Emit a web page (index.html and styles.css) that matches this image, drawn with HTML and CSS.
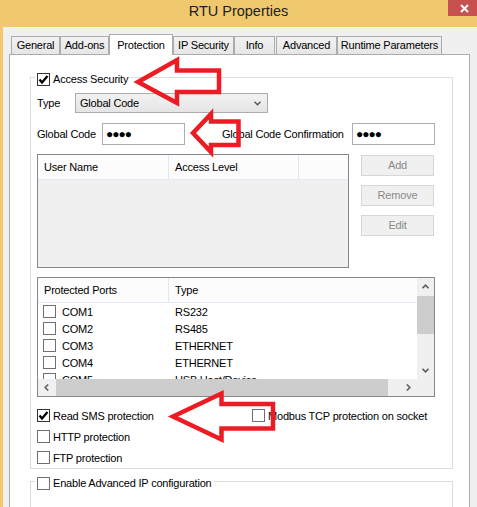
FILE: index.html
```html
<!DOCTYPE html>
<html>
<head>
<meta charset="utf-8">
<title>RTU Properties</title>
<link rel="stylesheet" href="styles.css">
</head>
<body>
<div class="window">
  <div class="titlebar">
    <div class="title">RTU Properties</div>
    <div class="close"><svg width="9" height="9" viewBox="0 0 9 9"><path d="M1 1L8 8M8 1L1 8" stroke="#fff" stroke-width="2" fill="none"/></svg></div>
  </div>
  <div class="client">
    <div class="tabs">
      <div class="tab w-general">General</div>
      <div class="tab w-addons">Add-ons</div>
      <div class="tab tab-sel w-prot">Protection</div>
      <div class="tab w-ip">IP Security</div>
      <div class="tab w-info">Info</div>
      <div class="tab w-adv">Advanced</div>
      <div class="tab w-rt">Runtime Parameters</div>
    </div>
    <div class="panel">
      <div class="group g1">
        <div class="legend">
          <span class="cb on"><svg width="11" height="11" viewBox="0 0 11 11"><path d="M1.5 5.5L4 8.5L9.5 2" stroke="#000" stroke-width="2.2" fill="none"/></svg></span>
          <span>Access Security</span>
        </div>
        <div class="row type-row">
          <span class="lbl-type">Type</span>
          <div class="select"><span>Global Code</span><svg width="7" height="5" viewBox="0 0 7 5"><path d="M0.5 0.8L3.5 3.8L6.5 0.8" stroke="#555" stroke-width="1.4" fill="none"/></svg></div>
        </div>
        <div class="row code-row">
          <span class="lbl-code">Global Code</span>
          <div class="input">●●●●</div>
          <span class="lbl-confirm">Global Code Confirmation</span>
          <div class="input">●●●●</div>
        </div>
        <div class="users-row">
          <div class="list users">
            <div class="lv-head">
              <div class="col c1">User Name</div>
              <div class="col c2">Access Level</div>
              <div class="col c3"></div>
            </div>
          </div>
          <div class="buttons">
            <div class="btn">Add</div>
            <div class="btn">Remove</div>
            <div class="btn">Edit</div>
          </div>
        </div>
        <div class="list ports">
          <div class="ports-main">
            <div class="lv-head">
              <div class="col c1">Protected Ports</div>
              <div class="col c3">Type</div>
            </div>
            <div class="prows">
              <div class="prow"><div class="pc1"><span class="cb"></span><span>COM1</span></div><div class="pc2">RS232</div></div>
              <div class="prow"><div class="pc1"><span class="cb"></span><span>COM2</span></div><div class="pc2">RS485</div></div>
              <div class="prow"><div class="pc1"><span class="cb"></span><span>COM3</span></div><div class="pc2">ETHERNET</div></div>
              <div class="prow"><div class="pc1"><span class="cb"></span><span>COM4</span></div><div class="pc2">ETHERNET</div></div>
              <div class="prow"><div class="pc1"><span class="cb"></span><span>COM5</span></div><div class="pc2">USB Host/Device</div></div>
            </div>
          </div>
          <div class="vscroll">
            <div class="sbtn"><svg width="7" height="5" viewBox="0 0 7 5"><path d="M0.5 4.2L3.5 1.2L6.5 4.2" stroke="#606060" stroke-width="1.6" fill="none"/></svg></div>
            <div class="vthumb"></div>
            <div class="spacer"></div>
            <div class="sbtn"><svg width="7" height="5" viewBox="0 0 7 5"><path d="M0.5 0.8L3.5 3.8L6.5 0.8" stroke="#606060" stroke-width="1.6" fill="none"/></svg></div>
          </div>
          <div class="hscroll">
            <div class="sbtn"><svg width="5" height="7" viewBox="0 0 5 7"><path d="M4.2 0.5L1.2 3.5L4.2 6.5" stroke="#606060" stroke-width="1.6" fill="none"/></svg></div>
            <div class="hthumb"></div>
            <div class="spacer"></div>
            <div class="sbtn"><svg width="5" height="7" viewBox="0 0 5 7"><path d="M0.8 0.5L3.8 3.5L0.8 6.5" stroke="#606060" stroke-width="1.6" fill="none"/></svg></div>
          </div>
          <div class="corner"></div>
        </div>
        <div class="opts">
          <div class="opt"><span class="cb on"><svg width="11" height="11" viewBox="0 0 11 11"><path d="M1.5 5.5L4 8.5L9.5 2" stroke="#000" stroke-width="2.2" fill="none"/></svg></span><span>Read SMS protection</span></div>
          <div class="opt"><span class="cb"></span><span>Modbus TCP protection on socket</span></div>
          <div class="opt"><span class="cb"></span><span>HTTP protection</span></div>
          <div></div>
          <div class="opt"><span class="cb"></span><span>FTP protection</span></div>
        </div>
      </div>
      <div class="group g2">
        <div class="legend">
          <span class="cb"></span>
          <span>Enable Advanced IP configuration</span>
        </div>
      </div>
    </div>
  </div>
  <svg class="arrows" width="477" height="507" viewBox="0 0 477 507">
    <g fill="none" stroke="#ED1C24" stroke-width="4.5" stroke-linejoin="miter" stroke-miterlimit="10">
      <polygon points="138,82 177,60 177,70.5 219,70.5 219,92 177,92 177,103"/>
      <polygon points="193,133 211,114 211,121.5 238.5,121.5 238.5,145 211,145 211,152"/>
      <polygon points="173,416.5 221.5,393.5 221.5,404 273,404 273,428.5 221.5,428.5 221.5,439.5"/>
    </g>
  </svg>
</div>
</body>
</html>
```

FILE: styles.css
```css
html, body {
  margin: 0;
  padding: 0;
  overflow: hidden;
}
body {
  width: 477px;
  height: 507px;
  font-family: "Liberation Sans", Arial, sans-serif;
  font-size: 11px;
  letter-spacing: -0.2px;
  color: #000;
}
.window {
  position: relative;
  width: 477px;
  height: 507px;
  background: #F0C86E;
  overflow: hidden;
}
.titlebar {
  position: relative;
  height: 27px;
}
.title {
  text-align: center;
  font-size: 14.5px;
  line-height: 23px;
  letter-spacing: 0;
  color: #1e1e1e;
}
.close {
  position: absolute;
  top: 0;
  right: 0;
  width: 29px;
  height: 16px;
  box-sizing: border-box;
  padding-left: 12px;
  background: #C75050;
  display: flex;
  align-items: center;
}
.close svg { display: block; }
.client {
  margin-left: 3px;
  height: 480px;
  box-sizing: border-box;
  padding: 7px 0 0 6px;
  background: #F0F0F0;
}
.tabs {
  display: flex;
  align-items: flex-end;
  height: 20px;
  padding-left: 2px;
}
.tab {
  box-sizing: border-box;
  height: 18px;
  border: 1px solid #ACACAC;
  border-bottom: none;
  background: linear-gradient(#F2F2F2, #E6E6E6);
  text-align: center;
  line-height: 17px;
  white-space: nowrap;
}
.tab-sel {
  position: relative;
  z-index: 1;
  height: 21px;
  margin-bottom: -1px;
  background: #fff;
  line-height: 20px;
}
.w-general { width: 49px; }
.w-addons { width: 49px; }
.w-prot { width: 64px; }
.w-ip { width: 61px; }
.w-info { width: 41px; margin-right: 1px; }
.w-adv { width: 61px; }
.w-rt { width: 105px; }
.panel {
  width: 461px;
  height: 460px;
  box-sizing: border-box;
  border: 1px solid #ACACAC;
  background: #fff;
  padding: 22px 0 0 20px;
}
.group {
  width: 423px;
  box-sizing: border-box;
  border: 1px solid #DCDCDC;
  padding: 0 0 0 6px;
}
.g2 {
  margin-top: 12px;
  height: 40px;
}
.legend {
  display: flex;
  align-items: center;
  gap: 3px;
  width: max-content;
  height: 16px;
  margin: -7px 0 0 -2px;
  padding: 0 2px;
  background: #fff;
}
.cb {
  flex: none;
  width: 13px;
  height: 13px;
  box-sizing: border-box;
  border: 1px solid #707070;
  background: #fff;
  display: flex;
  align-items: center;
  justify-content: center;
}
.cb.on { border-color: #333; }
.cb svg { display: block; }
.row {
  display: flex;
  align-items: center;
}
.type-row {
  margin-top: 6px;
  height: 20px;
}
.lbl-type { width: 38px; }
.select {
  width: 193px;
  height: 20px;
  box-sizing: border-box;
  border: 1px solid #ACACAC;
  background: linear-gradient(#F2F2F2, #E5E5E5);
  display: flex;
  align-items: center;
  justify-content: space-between;
  padding: 0 6px 0 4px;
}
.select svg { display: block; }
.code-row {
  margin-top: 10px;
  height: 22px;
}
.lbl-code { width: 65px; }
.lbl-confirm {
  margin-left: 37px;
  width: 130px;
  white-space: nowrap;
}
.input {
  width: 83px;
  height: 22px;
  box-sizing: border-box;
  border: 1px solid #ABADB3;
  background: #fff;
  padding-left: 3px;
  display: flex;
  align-items: center;
  font-size: 12px;
  letter-spacing: -1px;
}
.users-row {
  margin-top: 9px;
  display: flex;
  align-items: flex-start;
}
.list {
  box-sizing: border-box;
  border: 1px solid #828790;
}
.users {
  width: 312px;
  height: 114px;
  background: #F0F0F0;
}
.lv-head {
  display: flex;
  height: 25px;
  box-sizing: border-box;
  border-bottom: 1px solid #E3EAF4;
  background: #FCFCFC;
}
.col {
  box-sizing: border-box;
  padding-left: 6px;
  line-height: 24px;
  border-right: 1px solid #E3E8EF;
  white-space: nowrap;
}
.c1 { width: 131px; }
.c2 { width: 130px; }
.c3 { flex: 1; border-right: none; }
.buttons {
  margin: 1px 0 0 12px;
  display: flex;
  flex-direction: column;
  gap: 9px;
}
.btn {
  width: 73px;
  height: 21px;
  box-sizing: border-box;
  border: 1px solid #D6D6D6;
  background: #F0F0F0;
  color: #8A8A8A;
  text-align: center;
  line-height: 19px;
}
.ports {
  margin-top: 9px;
  width: 398px;
  height: 120px;
  background: #fff;
  display: grid;
  grid-template-columns: 1fr 17px;
  grid-template-rows: 1fr 17px;
}
.ports-main {
  overflow: hidden;
}
.prows {
  height: 76px;
  overflow: hidden;
}
.prow {
  display: flex;
  align-items: center;
  height: 17px;
}
.pc1 {
  width: 131px;
  box-sizing: border-box;
  padding-left: 5px;
  display: flex;
  align-items: center;
  gap: 6px;
}
.pc2 {
  padding-left: 6px;
  white-space: nowrap;
}
.vscroll {
  background: #F0F0F0;
  display: flex;
  flex-direction: column;
}
.hscroll {
  background: #F0F0F0;
  display: flex;
}
.sbtn {
  flex: none;
  width: 17px;
  height: 17px;
  display: flex;
  align-items: center;
  justify-content: center;
}
.sbtn svg { display: block; }
.vthumb {
  margin-top: 1px;
  height: 38px;
  background: #CDCDCD;
}
.hthumb {
  margin-left: 1px;
  width: 332px;
  background: #CDCDCD;
}
.spacer { flex: 1; }
.corner { background: #F0F0F0; }
.opts {
  margin-top: 8px;
  display: grid;
  grid-template-columns: 215px auto;
  grid-auto-rows: 21px;
}
.opt {
  display: flex;
  align-items: center;
  gap: 3px;
  white-space: nowrap;
}
.arrows {
  position: absolute;
  left: 0;
  top: 0;
  pointer-events: none;
}
```
